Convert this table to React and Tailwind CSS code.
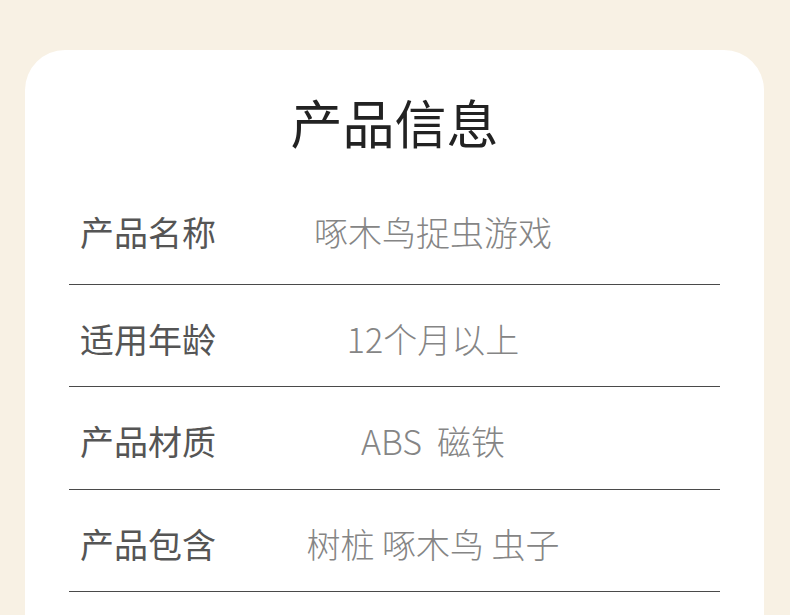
import React from 'react';

const rows = [
    { label: '产品名称', value: '啄木鸟捉虫游戏' },
    { label: '适用年龄', value: '12个月以上' },
    { label: '产品材质', value: 'ABS  磁铁' },
    { label: '产品包含', value: '树桩 啄木鸟 虫子' },
];

const App = () => {
    return (
        <div
            className="w-[790px] h-[615px] overflow-hidden bg-[#f8f1e4] pt-[50px] pl-[25px] pr-[26px]"
            style={{ fontFamily: '"Noto Sans CJK SC", "Noto Sans", sans-serif' }}
        >
            <div className="h-[600px] bg-white rounded-t-[40px] px-[44px]">
                {/* Title */}
                <div className="h-[128px] pt-[45px]">
                    <h1 className="text-center text-[52px] leading-[54px] font-normal text-[#222]">产品信息</h1>
                </div>

                {rows.map((row, i) => (
                    <div
                        key={row.label}
                        className={`flex items-start border-b border-[#4a4a4a] pt-[34px] ${i === 0 ? 'h-[107px]' : i === 2 ? 'h-[103px]' : 'h-[102px]'}`}
                    >
                        <div className="w-[144px] pl-[11px] text-[34px] leading-[40px] font-normal text-[#555] whitespace-nowrap">
                            {row.label}
                        </div>
                        <div className="flex-1 pr-[67px] text-center text-[34px] leading-[40px] font-extralight text-[#858585] whitespace-pre">
                            {row.value}
                        </div>
                    </div>
                ))}
            </div>
        </div>
    );
};

export default App;
